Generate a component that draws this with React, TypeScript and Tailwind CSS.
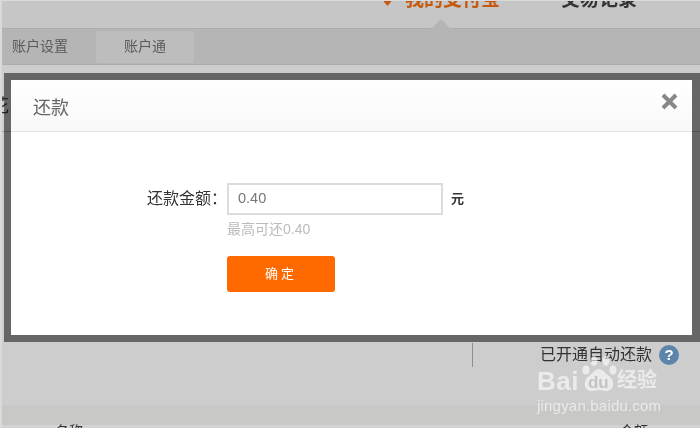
const cjk = "font-['Liberation_Sans','Noto_Sans_CJK_SC',sans-serif]";

function Paw() {
  return (
    <svg width="36" height="38" viewBox="0 0 36 38" fill="#ffffff" fillOpacity="0.6">
      <ellipse cx="5" cy="15" rx="3.5" ry="4.5" />
      <ellipse cx="13" cy="6" rx="3.5" ry="5" />
      <ellipse cx="25" cy="6" rx="3.5" ry="5" />
      <ellipse cx="32" cy="15" rx="3.5" ry="4.5" />
      <path d="M18 14c4 0 6 4 10 7 6 4 6 15-3 15-3 0-5-1-7-1s-4 1-7 1c-9 0-9-11-3-15 4-3 6-7 10-7z" />
    </svg>
  );
}

export default function App() {
  return (
    <div className={`relative w-[700px] h-[428px] overflow-hidden bg-[#cdcdcd] blur-[0.4px] ${cjk}`}>
      <header className="h-[28px] bg-[#c6c6c6] relative flex justify-end overflow-hidden">
        <div className="flex items-center gap-[61px] pr-[63px] h-[2px] -mt-[2px] text-[19px] font-bold leading-none">
          <span className="flex items-center gap-[12px] text-[#c4590f]">
            <svg className="mt-[1px]" width="11" height="12" viewBox="0 0 11 12" fill="#c4590f">
              <path d="M0 3c0-3 4-4 5.500-1.500C7-1 11 0 11 3c0 3-3 6-5.500 9C3 9 0 6 0 3z" />
            </svg>
            我的支付宝
          </span>
          <span className="text-[#333333]">交易记录</span>
        </div>
      </header>
      <nav className="relative h-[37px] bg-[#b5b5b5] border-y border-[#adadad] flex items-center pl-[12px] text-[14px] text-[#5a5a5a]">
        <span className="absolute left-[431px] -top-[10px] border-x-[10px] border-x-transparent border-b-[10px] border-b-[#b5b5b5]" />
        <span className="w-[84px]">账户设置</span>
        <span className="w-[98px] h-[32px] bg-[#bdbdbd] rounded-[2px] flex items-center justify-center">账户通</span>
      </nav>
      <main className="h-[340px] relative">
        <div className="pt-[32px] text-[18px] text-[#333333] leading-none -ml-[9px]">花</div>
        <div className="mt-[16px] h-px bg-[#a8a8a8]" />
        <div className="absolute left-[472px] top-[278px] w-px h-[24px] bg-[#8f8f8f]" />
        <div className="absolute right-[21px] top-[278px] flex items-center gap-[7px] text-[16px] text-[#333333]">
          已开通自动还款
          <span className="size-[20px] rounded-full bg-[#5d85ab] text-white text-[15px] font-bold flex items-center justify-center">?</span>
        </div>
      </main>
      <div className="h-[20px] bg-[#c8c8c6]" />
      <div className="h-[3px] bg-[#d2d2d2] relative text-[14px] text-[#333333]">
        <span className="absolute left-[55px] -top-[4px]">名称</span>
        <span className="absolute left-[620px] -top-[4px]">金额</span>
      </div>
      <div className="absolute inset-0 border-l-2 border-t border-[#dadada]" />

      {/* dialog */}
      <div className="absolute left-[4px] top-[73px] w-[696px] h-[269px] border-[7px] border-r-[8px] border-black/50 bg-white bg-clip-padding">
        <div className="h-[52px] bg-gradient-to-b from-white to-[#f8f8f8] border-b border-[#e6e6e6] flex items-center justify-between pl-[22px] pr-[14px]">
          <span className="mt-[5px] text-[18px] text-[#666666]">还款</span>
          <svg className="mb-[8px]" width="17" height="17" viewBox="0 0 17 17" stroke="#888888" strokeWidth="4">
            <path d="M2 2l13 13M15 2L2 15" />
          </svg>
        </div>
        <div className="flex flex-col pl-[216px] pt-[51px]">
          <div className="flex items-center h-[32px]">
            <label className="absolute left-[136px] text-[16px] text-[#333333]">还款金额：</label>
            <div className="w-[216px] h-[32px] border-2 border-[#dcdcdc] flex items-center pl-[9px] text-[14.5px] text-[#777777]">0.40</div>
            <span className="ml-[8px] text-[13px] font-bold text-[#333333]">元</span>
          </div>
          <div className="mt-[4px] text-[14px] text-[#bbbbbb]">最高可还0.40</div>
          <div className="mt-[16px] w-[108px] h-[36px] rounded-[3px] bg-[#ff6a00] text-white text-[13px] tracking-[3px] flex items-center justify-center">确定</div>
        </div>
      </div>

      {/* watermark */}
      <div className="absolute left-[537px] top-[355px] w-[163px] text-white/60">
        <div className="flex items-end h-[38px]">
          <span className="text-[26px] font-bold leading-none tracking-[0.5px] -mb-[1px]">Bai</span>
          <span className="relative ml-[2px]">
            <Paw />
            <span className="absolute left-[7px] top-[15px] text-[17px] font-bold text-[#c4c4c4]">du</span>
          </span>
          <span className="text-[20px] font-bold leading-none mb-[3px]">经验</span>
        </div>
        <div className="text-[15px] tracking-[0.2px] leading-none mt-[5px]">jingyan.baidu.com</div>
      </div>
    </div>
  );
}
